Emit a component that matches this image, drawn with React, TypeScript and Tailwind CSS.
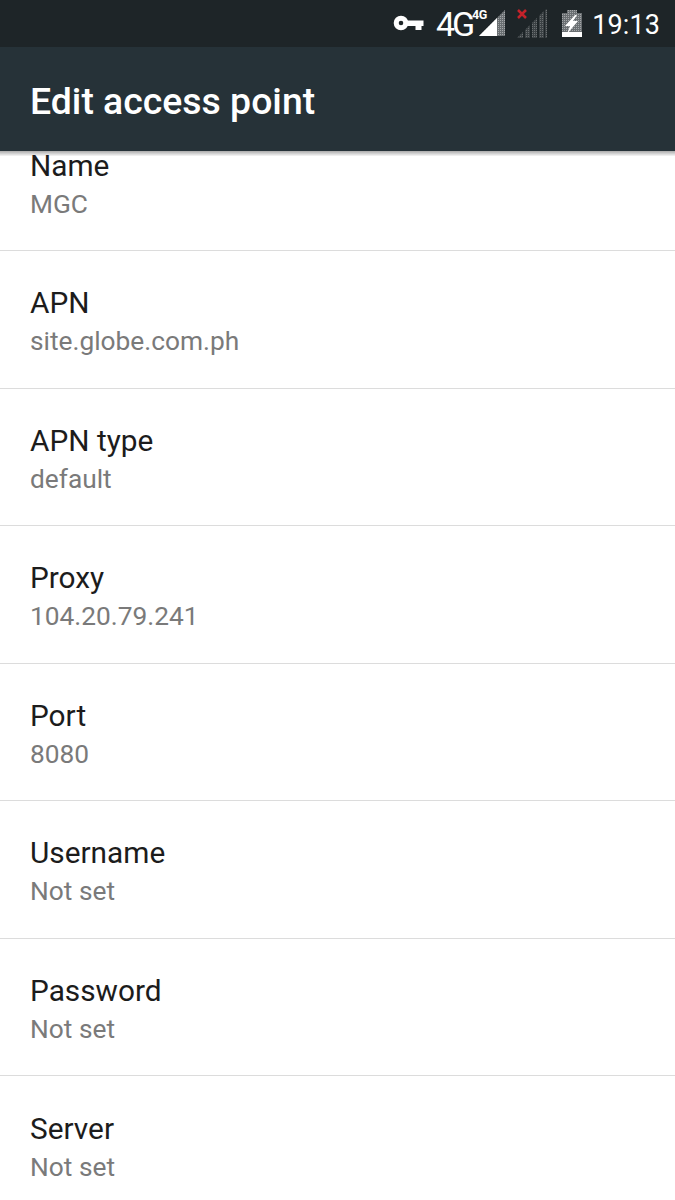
import React from "react";

const rows = [
  { label: "Name", value: "MGC" },
  { label: "APN", value: "site.globe.com.ph" },
  { label: "APN type", value: "default" },
  { label: "Proxy", value: "104.20.79.241" },
  { label: "Port", value: "8080" },
  { label: "Username", value: "Not set" },
  { label: "Password", value: "Not set" },
  { label: "Server", value: "Not set" },
];

const StatusIcons: React.FC = () => (
  <svg width="285" height="47" viewBox="375 0 285 47" className="block">
    <defs>
      <pattern id="dots" width="2" height="2" patternUnits="userSpaceOnUse">
        <rect width="2" height="2" fill="#6a6f72" />
        <rect width="1" height="1" fill="#a5a8aa" />
      </pattern>
      <pattern id="dotsDark" width="2" height="2" patternUnits="userSpaceOnUse">
        <rect width="2" height="2" fill="#3b4144" />
        <rect width="1" height="1" fill="#6b7072" />
      </pattern>
    </defs>
    {/* key */}
    <circle cx="401" cy="23" r="4.800" fill="none" stroke="#fff" strokeWidth="5" />
    <path d="M406 20.500h17.500v5.500h-2v4h-6v-4h-9.500z" fill="#fff" />
    {/* 4G signal */}
    <path d="M505 10v26h-26z" fill="url(#dots)" />
    <path d="M479 36l18-18v18z" fill="#fff" />
    {/* second signal, no service */}
    <path d="M517 38l6-6v6zM525 38v-8l5-5v13zM532 38v-15l5-5v20zM539 38v-22l5-5v27zM545 38v-28l2-1v29z" fill="url(#dotsDark)" />
    <path d="M518 10l8 8M526 10l-8 8" stroke="#c4222a" strokeWidth="2.500" />
    {/* battery */}
    <path d="M567 13v-3h10v3h5v24h-20v-24z" fill="url(#dots)" />
    <rect x="562" y="32" width="20" height="5" fill="#fff" />
    <path d="M575 15l-10 11h5l-3 8 11-13h-5l4-6z" fill="#fff" />
  </svg>
);

export default function App() {
  return (
    <div className="h-[1200px] w-[675px] overflow-hidden bg-white font-['Roboto',sans-serif]">
      {/* Status bar */}
      <div className="relative z-20 flex h-[47px] items-center justify-end bg-[#1e2528] pr-[15px]">
        <div className="relative">
          <StatusIcons />
          <span className="absolute left-[61px] top-[4px] text-[34px] leading-[40px] tracking-[-3px] text-white">
            4G
          </span>
          <span className="absolute left-[97px] top-[7px] text-[12.500px] leading-[16px] font-bold tracking-[-0.500px] text-white">
            4G
          </span>
        </div>
        <span className="absolute right-[15px] top-[7px] text-[27px] leading-[36px] tracking-[0.100px] text-white">
          19:13
        </span>
      </div>

      {/* App bar */}
      <div className="relative z-10 flex h-[104px] items-center bg-[#263238] pl-[30px] pt-[3px]">
        <h1 className="text-[37.400px] leading-[44px] font-medium text-white">Edit access point</h1>
        <div className="absolute left-0 right-0 top-full h-[5px] bg-gradient-to-b from-[#00000055] to-[#00000008]" />
      </div>

      {/* List, scrolled up under the app bar */}
      <div className="mt-[-37.500px]">
        {rows.map((row, i) => (
          <div
            key={row.label}
            className={`flex h-[137.5px] flex-col justify-center px-[30px] pt-[6px] ${
              i < rows.length - 1 ? "border-b border-[#dcdcdc]" : ""
            }`}
          >
            <div className="text-[29.800px] leading-[38px] text-[#1c1c1c]">{row.label}</div>
            <div className="text-[26.300px] leading-[38px] text-[#7a7a7a]">{row.value}</div>
          </div>
        ))}
      </div>
    </div>
  );
}
